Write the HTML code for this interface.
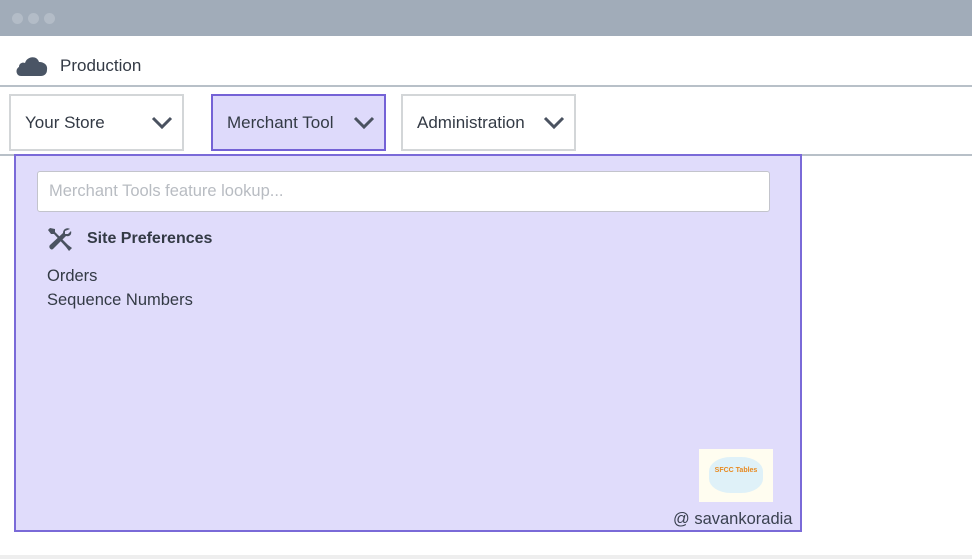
<!DOCTYPE html>
<html><head><meta charset="utf-8"><style>
*{margin:0;padding:0;box-sizing:border-box}
body{width:972px;height:559px;background:#fff;font-family:"Liberation Sans",sans-serif;color:#3a4150;position:relative;overflow:hidden}
.bar{position:absolute;left:0;top:0;width:972px;height:36px;background:#a1acb9}
.dot{position:absolute;top:13px;width:11px;height:11px;border-radius:50%;background:#b3bcc7}
.hdr{position:absolute;left:60px;top:56px;font-size:17px;color:#333a45}
.line{position:absolute;left:0;width:972px;height:2px;background:#b8c0c8}
.btn{position:absolute;top:94px;height:57px;border:2px solid #d3d6d8;background:#fff;font-size:17px;color:#333a45;padding-left:14px;line-height:53px;white-space:nowrap}
.btn svg{position:absolute;top:20px}
.panel{position:absolute;left:14px;top:154px;width:788px;height:378px;background:#e0dcfb;border:2px solid #7a6ad8}
.inp{position:absolute;left:21px;top:15px;width:733px;height:41px;background:#fff;border:1.5px solid #c3c4cc;border-radius:3px;font-size:16.5px;color:#b8bcc2;padding-left:11px;line-height:38px;white-space:nowrap}
.t{position:absolute;font-size:16.5px;color:#333a45;white-space:nowrap}
</style></head><body>
<div class="bar"></div>
<div class="dot" style="left:12px"></div><div class="dot" style="left:28px"></div><div class="dot" style="left:44px"></div>
<svg style="position:absolute;left:14px;top:53px" width="35" height="24" viewBox="0 0 35 24"><path d="M7 23 C2 23 1 16 5 14 C5 10 9 9 11 10 C13 3 23 2 25 9 C30 9 34 12 33 17 C33 21 30 23 27 23 Z" fill="#4a5565"/></svg>
<div class="hdr">Production</div>
<div class="line" style="top:85px"></div>
<div class="btn" style="left:9px;width:175px">Your Store<svg style="left:140px" width="22" height="14" viewBox="0 0 22 14"><path d="M2 2 L11 11 L20 2" stroke="#4a5260" stroke-width="3" fill="none"/></svg></div>
<div class="btn" style="left:211px;width:175px;background:#dedafb;border-color:#7462d6">Merchant Tool<svg style="left:140px" width="22" height="14" viewBox="0 0 22 14"><path d="M2 2 L11 11 L20 2" stroke="#4a5260" stroke-width="3" fill="none"/></svg></div>
<div class="btn" style="left:401px;width:175px">Administration<svg style="left:140px" width="22" height="14" viewBox="0 0 22 14"><path d="M2 2 L11 11 L20 2" stroke="#4a5260" stroke-width="3" fill="none"/></svg></div>
<div class="line" style="top:154px"></div>
<div class="panel">
<div class="inp">Merchant Tools feature lookup...</div>
<svg style="position:absolute;left:31px;top:71px" width="26" height="26" viewBox="0 0 26 26">
<path d="M3 1 L1 3 L4 7 L7 7 L19 20 L22 24 L25 21 L21 18 L8 5 L8 2 Z" fill="#4a5260"/>
<path d="M23 2 C20 0 16 2 16 6 L3 18 C1 20 4 24 6 22 L19 9 C23 10 25 7 24 4 L21 7 L18 7 L18 4 Z" fill="#4a5260"/>
</svg>
<div class="t" style="left:71px;top:74px;font-weight:bold;font-size:16px">Site Preferences</div>
<div class="t" style="left:31px;top:111px">Orders</div>
<div class="t" style="left:31px;top:135px">Sequence Numbers</div>
<div style="position:absolute;left:683px;top:293px;width:74px;height:53px;background:#fffdf0">
<div style="position:absolute;left:10px;top:8px;width:54px;height:36px;border-radius:40%;background:#dff1f8"></div>
<div style="position:absolute;left:0;top:18px;width:74px;text-align:center;font-size:7px;color:#e88a20;font-weight:bold">SFCC Tables</div>
</div>
<div class="t" style="left:657px;top:354px;font-size:16.5px;color:#3a4150">@ savankoradia</div>
</div>
<div style="position:absolute;left:0;top:555px;width:972px;height:4px;background:#eeeeee"></div>
</body></html>
